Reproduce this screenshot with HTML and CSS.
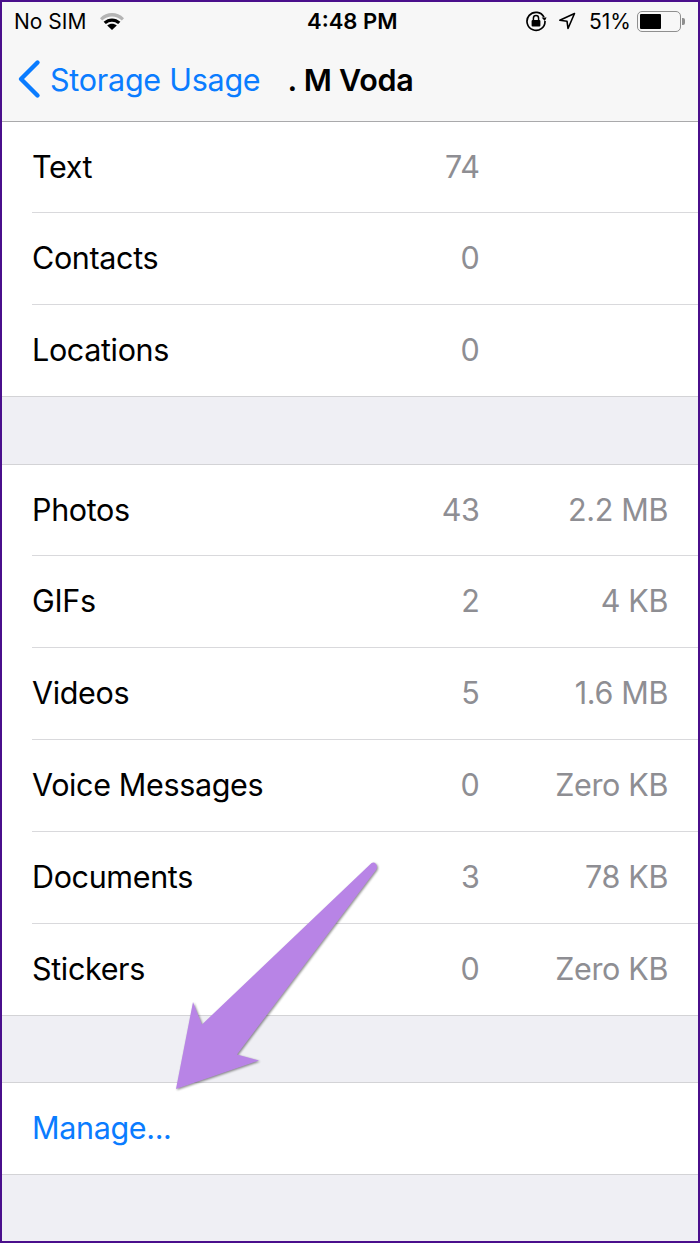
FILE: index.html
```html
<!DOCTYPE html>
<html lang="en">
<head>
<meta charset="utf-8">
<title>Storage Usage</title>
<link rel="stylesheet" href="styles.css">
</head>
<body>
<div class="frame">
  <header class="topbar">
    <div class="status">
      <div class="status-left">
        <span>No SIM</span>
        <svg class="wifi" viewBox="0 0 26 18"><path d="M1 6.2C8 -0.6 18 -0.6 25 6.2L22.8 8.5C17 3.2 9 3.2 3.2 8.5Z" fill="#b4b4b4"/><path d="M4.6 9.8C9.6 5.3 16.4 5.3 21.4 9.8L19.2 12.1C15.4 8.8 10.6 8.8 6.8 12.1Z" fill="#000"/><path d="M8.2 13.4C11 11.2 15 11.2 17.8 13.4L13 18Z" fill="#000"/></svg>
      </div>
      <div class="status-time">4:48 PM</div>
      <div class="status-right">
        <svg class="lock" viewBox="0 0 22 22"><path d="M19 7.2A9 9 0 1 0 20 11" fill="none" stroke="#000" stroke-width="1.7"/><path d="M16.6 7.4L21.6 7.4L19.8 11Z" fill="#000"/><rect x="6.6" y="10" width="8.8" height="6.6" rx="1" fill="#000"/><path d="M8.4 10V8.2a2.6 2.6 0 0 1 5.2 0V10" fill="none" stroke="#000" stroke-width="1.5"/></svg>
        <svg class="loc" viewBox="0 0 18 18"><path d="M16.5 1.5L1.8 8.2L9 9.2L10 16.5Z" fill="none" stroke="#000" stroke-width="1.6" stroke-linejoin="round"/></svg>
        <span class="pct">51%</span>
        <div class="battery"><div class="battery-fill"></div></div>
        <div class="battery-tip"></div>
      </div>
    </div>
    <nav class="navbar">
      <svg class="chevron" viewBox="0 0 26 40"><path d="M21.5 3.5L5 20L21.5 36.5" fill="none" stroke="#0a7cff" stroke-width="4.4" stroke-linecap="round" stroke-linejoin="round"/></svg>
      <span class="back">Storage Usage</span>
      <span class="title">. M Voda</span>
    </nav>
  </header>

  <section class="group group-first">
    <div class="row"><span class="label">Text</span><span class="count">74</span><span class="size"></span></div>
    <div class="row"><span class="label">Contacts</span><span class="count">0</span><span class="size"></span></div>
    <div class="row"><span class="label">Locations</span><span class="count">0</span><span class="size"></span></div>
  </section>

  <section class="group group-media">
    <div class="row"><span class="label">Photos</span><span class="count">43</span><span class="size">2.2 MB</span></div>
    <div class="row"><span class="label">GIFs</span><span class="count">2</span><span class="size">4 KB</span></div>
    <div class="row"><span class="label">Videos</span><span class="count">5</span><span class="size">1.6 MB</span></div>
    <div class="row"><span class="label">Voice Messages</span><span class="count">0</span><span class="size">Zero KB</span></div>
    <div class="row"><span class="label">Documents</span><span class="count">3</span><span class="size">78 KB</span></div>
    <div class="row"><span class="label">Stickers</span><span class="count">0</span><span class="size">Zero KB</span></div>
  </section>

  <section class="group">
    <div class="row"><span class="label link">Manage...</span></div>
  </section>

  <svg class="arrow" viewBox="0 0 700 1243"><path d="M370 864.500Q373 861 376 864Q378 867 376 870L237 1054.500L259 1060.500L176 1089L193 1002L202 1024.500Z" fill="#b884e6"/></svg>
</div>
</body>
</html>
```
FILE: styles.css
```css
* { box-sizing: border-box; }
html, body { margin: 0; padding: 0; }
body { width: 700px; height: 1243px; overflow: hidden; }
.frame {
  position: relative;
  width: 700px;
  height: 1243px;
  border: 2px solid #4a0f8c;
  background: #efeff4;
  font-family: Inter, "Liberation Sans", sans-serif;
  color: #000;
}
.topbar {
  height: 120px;
  background: #f7f7f7;
  border-bottom: 1px solid #a9a9ab;
}
.status {
  height: 38px;
  padding: 0 0 0 12px;
  display: flex;
  align-items: center;
  position: relative;
  font-size: 21px;
}
.status-left { display: flex; align-items: center; gap: 13px; flex: 1; }
.wifi { width: 26px; height: 18px; }
.status-time {
  position: absolute;
  left: 305px;
  font-weight: 600;
  font-size: 22px;
}
.status-right { display: flex; align-items: center; margin-right: 13px; }
.lock { width: 22px; height: 22px; margin-right: 11px; }
.loc { width: 18px; height: 18px; margin-right: 13px; }
.pct { margin-right: 6px; }
.battery {
  width: 44px;
  height: 21px;
  border: 1.500px solid #8f8f8f;
  border-radius: 5px;
  padding: 2px;
}
.battery-fill { width: 21px; height: 100%; background: #000; border-radius: 1px; }
.battery-tip { width: 3px; height: 7px; background: #8f8f8f; border-radius: 0 2px 2px 0; margin-left: 1px; }
.navbar {
  height: 78px;
  display: flex;
  align-items: center;
  padding: 0 0 0 14px;
}
.chevron { width: 26px; height: 40px; margin-right: 8px; }
.back { color: #0a7cff; font-size: 30.500px; letter-spacing: -0.250px; }
.title { font-size: 30.500px; font-weight: 600; margin-left: 27px; letter-spacing: -0.250px; }
.group {
  background: #fff;
  border-top: 1px solid #d3d3d6;
  border-bottom: 1px solid #d3d3d6;
  margin-bottom: 67px;
}
.group-first { border-top: 0; }
.group-media { margin-bottom: 66px; }
.row {
  height: 92px;
  margin-left: 30px;
  padding-right: 30px;
  padding-bottom: 2px;
  display: flex;
  align-items: center;
  font-size: 30.500px;
  letter-spacing: -0.350px;
  border-bottom: 1px solid #d9d9dc;
}
.row:first-child { height: 91px; }
.row:last-child { border-bottom: 0; height: 91px; }
.label { flex: 1; }
.link { color: #0a7cff; }
.count { width: 60px; text-align: right; color: #8e8e93; margin-right: 188.500px; }
.size { width: 0; white-space: nowrap; display: flex; justify-content: flex-end; color: #8e8e93; }
.arrow {
  position: absolute;
  left: -2px;
  top: -2px;
  width: 700px;
  height: 1243px;
  filter: drop-shadow(1px 1px 1px rgba(0, 0, 0, 0.45));
}
```
